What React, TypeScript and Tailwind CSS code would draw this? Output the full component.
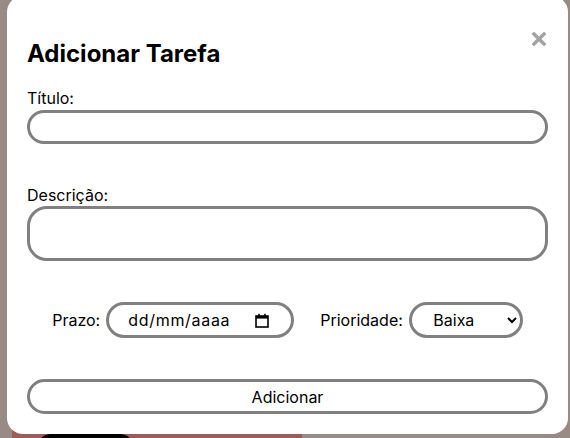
import { useState } from "react"

function CalendarIcon() {
  return (
    <svg width="14" height="15" viewBox="0 0 14 15" className="shrink-0">
      <rect x="1" y="3" width="12" height="11" fill="none" stroke="#000" strokeWidth="1.6" />
      <rect x="1" y="3" width="12" height="2.6" fill="#000" />
      <rect x="3.2" y="0.8" width="1.6" height="3" fill="#000" />
      <rect x="9.2" y="0.8" width="1.6" height="3" fill="#000" />
    </svg>
  )
}

export default function App() {
  const [titulo, setTitulo] = useState("")
  const [descricao, setDescricao] = useState("")
  const [prioridade, setPrioridade] = useState("baixa")

  return (
    <div className="relative w-full h-[438px] overflow-hidden bg-[#988b85]" style={{ fontFamily: "Inter, 'Noto Sans', sans-serif" }}>
      {/* page content behind the overlay */}
      <div className="absolute left-[12px] top-[-20px] w-[290px] h-[480px] rounded-[16px] bg-[#9a5d58]" />
      <div className="absolute left-[37px] top-[434px] w-[97px] h-[30px] rounded-[14px] bg-black" />

      {/* modal */}
      <div className="absolute left-[7px] top-[-4px] w-[561px] h-[438px] rounded-[16px] bg-white px-5 pt-[43px] pb-5 text-black">
        <button className="absolute right-[22px] top-[36px] w-[14px] h-[14px]" aria-label="Fechar">
          <svg width="14" height="14" viewBox="0 0 14 14">
            <path d="M2 2 L12 12 M12 2 L2 12" stroke="#a3a3a3" strokeWidth="3.4" strokeLinecap="square" />
          </svg>
        </button>

        <h2 className="text-[24px] leading-[29px] font-bold">Adicionar Tarefa</h2>

        <form className="flex flex-col mt-5" onSubmit={(e) => e.preventDefault()}>
          <label className="text-[16px] leading-[20px]">Título:</label>
          <input
            type="text"
            value={titulo}
            onChange={(e) => setTitulo(e.target.value)}
            className="mt-[2px] h-[34px] w-full rounded-full border-[3px] border-[#808080] px-4 text-[16px] outline-none"
          />

          <label className="mt-[41px] text-[16px] leading-[20px]">Descrição:</label>
          <textarea
            value={descricao}
            onChange={(e) => setDescricao(e.target.value)}
            className="mt-[1px] h-[55px] w-full resize-none rounded-[20px] border-[3px] border-[#808080] px-4 py-2 text-[16px] outline-none"
          />

          <div className="mt-[41px] flex items-center justify-center text-[16px]">
            <span>Prazo:</span>
            <div className="ml-[6px] flex h-[36px] w-[188px] items-center justify-between rounded-full border-[3px] border-[#808080] pl-[19px] pr-[22px]">
              <span className="tracking-[0.7px]">dd/mm/aaaa</span>
              <CalendarIcon />
            </div>
            <span className="ml-[26px]">Prioridade:</span>
            <select
              value={prioridade}
              onChange={(e) => setPrioridade(e.target.value)}
              className="ml-[6px] h-[36px] w-[114px] rounded-full border-[3px] border-[#808080] pl-0 pr-3 text-center text-[16px] outline-none"
            >
              <option value="baixa">Baixa</option>
              <option value="media">Média</option>
              <option value="alta">Alta</option>
            </select>
          </div>

          <button
            type="submit"
            className="mt-[41px] h-[35px] w-full rounded-full border-[3px] border-[#808080] bg-white text-[16px]"
          >
            Adicionar
          </button>
        </form>
      </div>
    </div>
  )
}
